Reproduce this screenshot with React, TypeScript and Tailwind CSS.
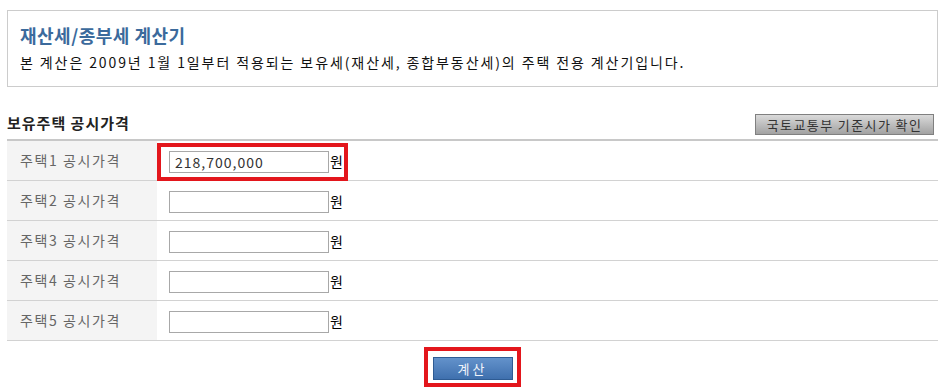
import React from 'react';

const rows = [
  { label: '주택1 공시가격', value: '218,700,000' },
  { label: '주택2 공시가격', value: '' },
  { label: '주택3 공시가격', value: '' },
  { label: '주택4 공시가격', value: '' },
  { label: '주택5 공시가격', value: '' },
];

const PriceRow = ({ label, value, marked }: { label: string; value: string; marked: boolean }) => (
  <div className="flex h-10 border-b border-[#d2d2d2]">
    <div className="w-[150px] bg-[#f4f4f4] pl-[13px] flex items-center text-[14px] tracking-[1.6px] text-[#666]">
      {label}
    </div>
    <div className="flex items-center pl-[12px] pt-[2px]">
      <div className="relative flex items-center">
        <input
          defaultValue={value}
          className="w-[160px] h-[22px] border border-[#a8a8a8] bg-white px-[5px] text-[14px] tracking-[1px] text-[#333] outline-none"
        />
        <span className="ml-[1px] text-[14px] text-black">원</span>
        {marked && (
          <span className="pointer-events-none absolute -left-[12px] -right-[5px] -top-[8px] -bottom-[8px] border-4 border-[#e3161c]" />
        )}
      </div>
    </div>
  </div>
);

export default function App() {
  return (
    <div className="min-h-screen bg-white px-[7px] pt-[10px] font-['Noto_Sans_CJK_KR',sans-serif]">
      <div className="h-[77px] border border-[#cccccc] pl-[12px] pt-[11px]">
        <h1 className="text-[18px] leading-[26px] font-bold tracking-[0.5px] text-[#3b6a9c]">재산세/종부세 계산기</h1>
        <p className="mt-[4px] text-[14px] leading-[20px] tracking-[1.9px] text-[#111]">
          본 계산은 2009년 1월 1일부터 적용되는 보유세(재산세, 종합부동산세)의 주택 전용 계산기입니다.
        </p>
      </div>

      <div className="mt-[27px] h-[25px] flex items-start justify-between">
        <h2 className="text-[15px] leading-[17px] font-bold tracking-[1px] text-[#222]">보유주택 공시가격</h2>
        <button className="mr-[4px] w-[179px] h-[21px] border border-[#808080] bg-gradient-to-b from-[#dadada] to-[#a2a2a2] text-[13px] leading-[19px] tracking-[1.4px] text-[#333]">
          국토교통부 기준시가 확인
        </button>
      </div>

      <div className="border-t-2 border-[#c8c8c8]">
        {rows.map((r, i) => (
          <PriceRow key={r.label} label={r.label} value={r.value} marked={i === 0} />
        ))}
      </div>

      <div className="mt-[14px] flex justify-center">
        <div className="relative">
          <button className="w-[80px] h-[23px] border border-[#2e5b93] bg-gradient-to-b from-[#6392cb] to-[#3f70ae] text-[13px] leading-[21px] tracking-[3px] text-[#eef3fa]">
            계산
          </button>
          <span className="pointer-events-none absolute -left-[9px] -right-[8px] -top-[8px] -bottom-[7px] border-4 border-[#e3161c]" />
        </div>
      </div>
    </div>
  );
}
